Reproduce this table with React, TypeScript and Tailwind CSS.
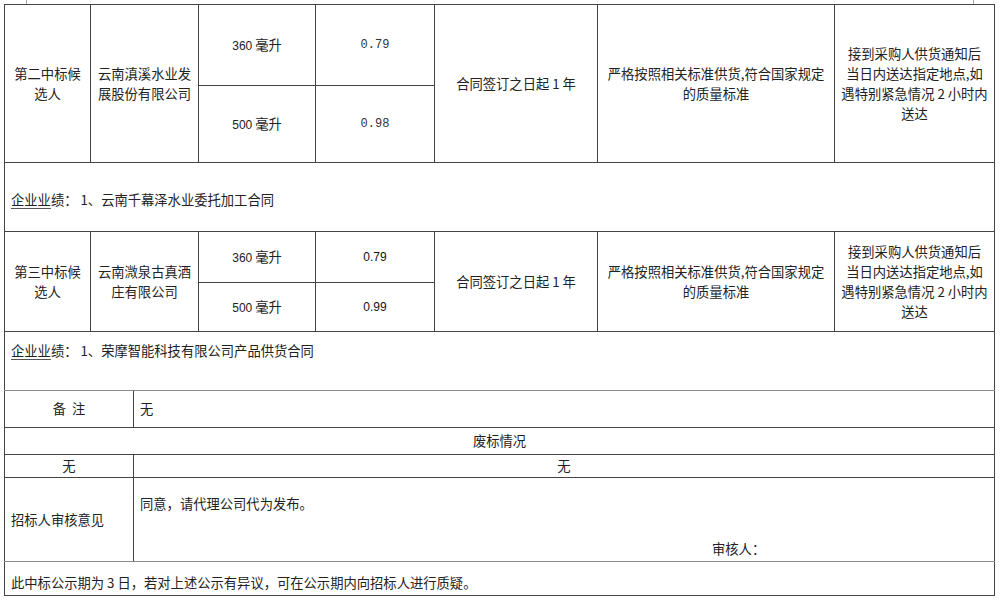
const cell = "border border-[#444] p-0";

function Perf({ text }: { text: string }) {
  return (
    <>
      <span className="underline decoration-[#555] underline-offset-[3px]">企业业</span>
      绩： 1、{text}
    </>
  );
}

export default function App() {
  return (
    <div className="min-h-screen bg-white pl-[4px] font-['Noto_Sans_CJK_SC','Liberation_Sans',sans-serif] text-[13.3px] leading-[20px] text-[#222]">
      <div className="flex h-[4px]">
        <div className="ml-[22px] h-full w-px bg-[#aaa]" />
        <div className="ml-auto mr-[26px] h-full w-px bg-[#aaa]" />
      </div>
      <table className="w-[991px] table-fixed border-collapse">
        <colgroup>
          <col className="w-[86px]" />
          <col className="w-[43px]" />
          <col className="w-[65px]" />
          <col className="w-[117px]" />
          <col className="w-[119px]" />
          <col className="w-[163px]" />
          <col className="w-[237px]" />
          <col className="w-[160px]" />
        </colgroup>
        <tbody>
          {/* second candidate */}
          <tr className="h-[81px]">
            <td rowSpan={2} className={`${cell} text-center`}>
              第二中标候<br />选人
            </td>
            <td rowSpan={2} colSpan={2} className={`${cell} text-center`}>
              云南滇溪水业发<br />展股份有限公司
            </td>
            <td className={`${cell} text-center`}>
              <span className="font-['Liberation_Sans'] text-[12px]">360</span> 毫升
            </td>
            <td className={`${cell} text-center font-['Liberation_Mono'] text-[12px] text-[#333]`}>0.79</td>
            <td rowSpan={2} className={`${cell} text-center`}>
              合同签订之日起 1 年
            </td>
            <td rowSpan={2} className={`${cell} text-center`}>
              严格按照相关标准供货,符合国家规定<br />的质量标准
            </td>
            <td rowSpan={2} className={`${cell} text-center`}>
              接到采购人供货通知后<br />当日内送达指定地点,如<br />遇特别紧急情况 2 小时内<br />送达
            </td>
          </tr>
          <tr className="h-[77px]">
            <td className={`${cell} text-center`}>
              <span className="font-['Liberation_Sans'] text-[12px]">500</span> 毫升
            </td>
            <td className={`${cell} text-center font-['Liberation_Mono'] text-[12px] text-[#333]`}>0.98</td>
          </tr>
          <tr className="h-[69px]">
            <td colSpan={8} className={`${cell} pl-[6px] pt-[6px]`}>
              <Perf text="云南千幕泽水业委托加工合同" />
            </td>
          </tr>

          {/* third candidate */}
          <tr className="h-[51px]">
            <td rowSpan={2} className={`${cell} text-center`}>
              第三中标候<br />选人
            </td>
            <td rowSpan={2} colSpan={2} className={`${cell} text-center`}>
              云南溦泉古真酒<br />庄有限公司
            </td>
            <td className={`${cell} text-center`}>
              <span className="font-['Liberation_Sans'] text-[12px]">360</span> 毫升
            </td>
            <td className={`${cell} text-center font-['Liberation_Sans'] text-[12px] text-[#111]`}>0.79</td>
            <td rowSpan={2} className={`${cell} text-center`}>
              合同签订之日起 1 年
            </td>
            <td rowSpan={2} className={`${cell} text-center`}>
              严格按照相关标准供货,符合国家规定<br />的质量标准
            </td>
            <td rowSpan={2} className={`${cell} text-center`}>
              接到采购人供货通知后<br />当日内送达指定地点,如<br />遇特别紧急情况 2 小时内<br />送达
            </td>
          </tr>
          <tr className="h-[49px]">
            <td className={`${cell} text-center`}>
              <span className="font-['Liberation_Sans'] text-[12px]">500</span> 毫升
            </td>
            <td className={`${cell} text-center font-['Liberation_Sans'] text-[12px] text-[#111]`}>0.99</td>
          </tr>
          <tr className="h-[59px]">
            <td colSpan={8} className={`${cell} border-b-[#8a8a8a] pl-[6px] pt-[9px] align-top`}>
              <Perf text="荣摩智能科技有限公司产品供货合同" />
            </td>
          </tr>

          {/* notes */}
          <tr className="h-[37px]">
            <td colSpan={2} className={`${cell} text-center`}>
              备&nbsp;&nbsp;注
            </td>
            <td colSpan={6} className={`${cell} pl-[6px]`}>
              无
            </td>
          </tr>
          <tr className="h-[27px]">
            <td colSpan={8} className={`${cell} text-center`}>
              废标情况
            </td>
          </tr>
          <tr className="h-[23px]">
            <td colSpan={2} className={`${cell} text-center`}>
              无
            </td>
            <td colSpan={6} className={`${cell} text-center`}>
              无
            </td>
          </tr>
          <tr className="h-[84px]">
            <td colSpan={2} className={`${cell} border-b-[#8a8a8a] pl-[6px]`}>
              招标人审核意见
            </td>
            <td colSpan={6} className={`${cell} border-b-[#8a8a8a] pl-[6px] pt-[16px] align-top`}>
              <div>同意，请代理公司代为发布。</div>
              <div className="mt-[25px] pl-[572px]">审核人：</div>
            </td>
          </tr>
          <tr className="h-[34px]">
            <td colSpan={8} className={`${cell} pl-[6px] pt-[8px]`}>
              此中标公示期为 3 日，若对上述公示有异议，可在公示期内向招标人进行质疑。
            </td>
          </tr>
        </tbody>
      </table>
    </div>
  );
}
